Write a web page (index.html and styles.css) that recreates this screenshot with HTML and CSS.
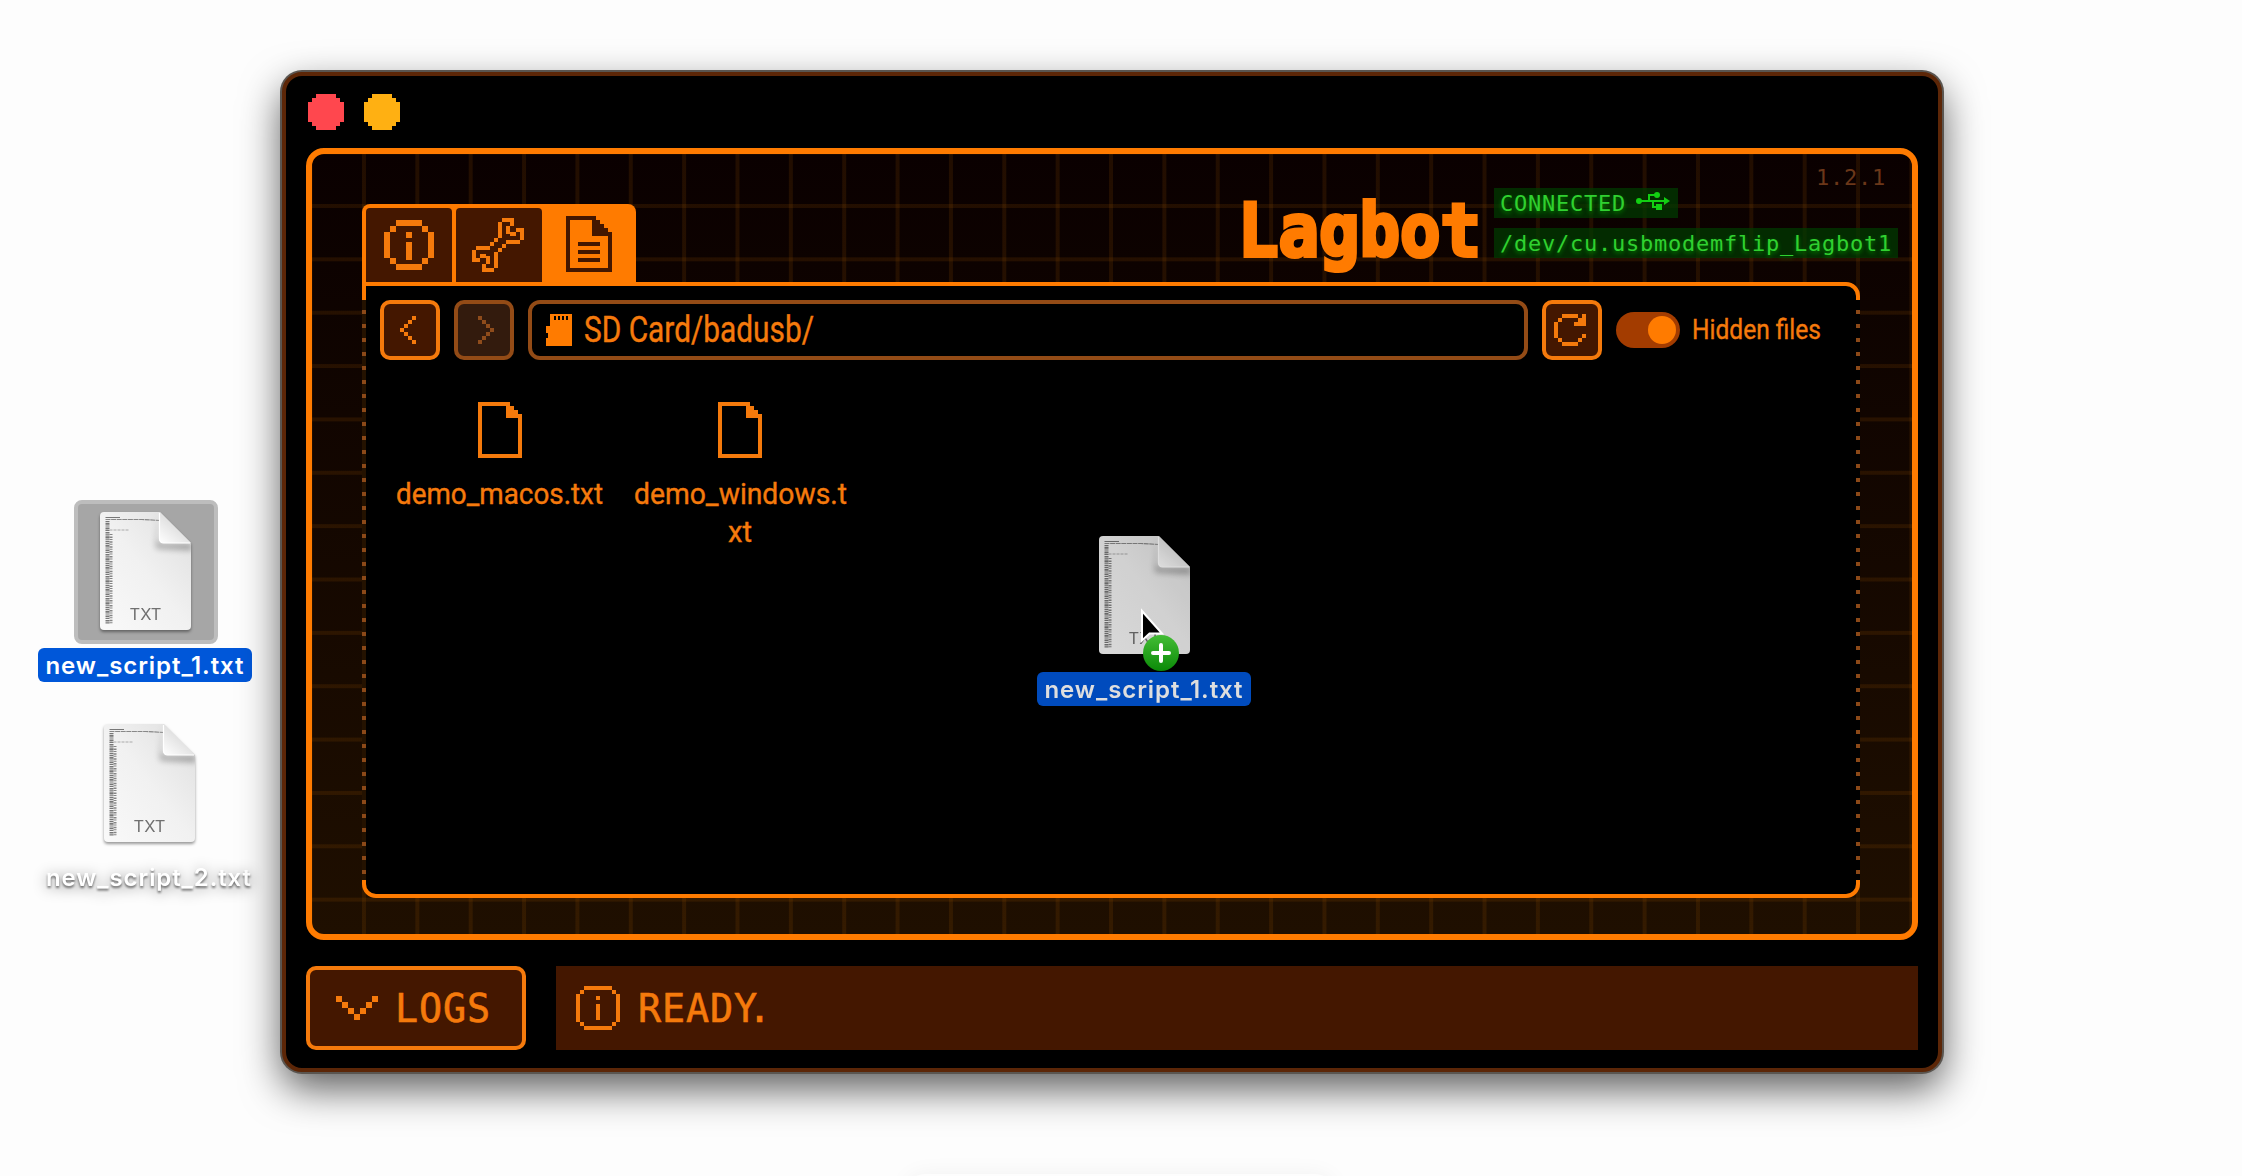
FILE: index.html
```html
<!DOCTYPE html>
<html lang="en">
<head>
<meta charset="utf-8">
<title>Lagbot</title>
<link rel="stylesheet" href="styles.css">
</head>
<body>
<svg class="defs" aria-hidden="true">
  <defs>
    <linearGradient id="paper" x1="0" y1="1" x2="1" y2="0">
      <stop offset="0" stop-color="#f9f9f9"/><stop offset=".5" stop-color="#f1f1f1"/><stop offset="1" stop-color="#dedede"/>
    </linearGradient>
    <linearGradient id="fold" x1="0" y1="1" x2=".6" y2=".3">
      <stop offset="0" stop-color="#ffffff"/><stop offset="1" stop-color="#dadada"/>
    </linearGradient>
    <linearGradient id="plus" x1="0" y1="0" x2="0" y2="1">
      <stop offset="0" stop-color="#43bd35"/><stop offset="1" stop-color="#0b8a08"/>
    </linearGradient>
    <filter id="soft" x="-30%" y="-30%" width="160%" height="160%"><feGaussianBlur stdDeviation="3"/></filter>
    <clipPath id="sheet"><path d="M4 0H60L91 31V114a4 4 0 0 1-4 4H4a4 4 0 0 1-4-4V4a4 4 0 0 1 4-4z"/></clipPath>
    <symbol id="txt-doc" viewBox="0 0 91 118">
      <g clip-path="url(#sheet)">
        <path d="M0 0H91V118H0z" fill="url(#paper)"/>
        <path d="M58 0V28a4 4 0 0 0 4 4H92V38L56 36z" fill="#000" opacity=".35" filter="url(#soft)"/>
        <path d="M5.500 5.500H20" stroke="#777" stroke-width="1"/>
        <path d="M5.500 7.500H42L60 8.500" fill="none" stroke="#888" stroke-width="1.200" stroke-dasharray="5 .6"/>
        <path d="M5.500 18H29" stroke="#aaa" stroke-width="1" stroke-dasharray="3 1"/>
        <path d="M7.500 9V112" stroke="#777" stroke-width="4" stroke-dasharray="1.200 .9 1.600 .7"/>
        <path d="M11 22V112" stroke="#858585" stroke-width="3" stroke-dasharray="1 1.400 1.500 1"/>
      </g>
      <path d="M59.500 0V27a4 4 0 0 0 4 4H91z" fill="url(#fold)"/>
      <path d="M59.500 1V27a4 4 0 0 0 4 4H90" fill="none" stroke="#fff" stroke-width="1.200"/>
    </symbol>
    <symbol id="file" viewBox="0 0 44 56">
      <path fill-rule="evenodd" d="M0 0H32V4H36V8H40V12H44V56H0zM4 4V52H40V16H28V4z"/>
    </symbol>
  </defs>
</svg>

<div class="dock-shadow"></div>

<div class="desk-file desk-file--first">
  <div class="thumb thumb--selected"><div class="doc"><svg width="91" height="118"><use href="#txt-doc"/></svg><span class="doc-type">TXT</span></div></div>
  <div class="name name--selected"><svg width="214" height="34"><text x="7.500" y="26" textLength="198">new_script_1.txt</text></svg></div>
</div>

<div class="desk-file desk-file--second">
  <div class="doc"><svg width="91" height="118"><use href="#txt-doc"/></svg><span class="doc-type">TXT</span></div>
  <div class="name name--plain"><svg width="214" height="40"><text x="4" y="28" textLength="205">new_script_2.txt</text></svg></div>
</div>

<main class="window">
  <div class="titlebar">
    <svg class="px light light--close" width="36" height="36"><path d="M8 0H28V4H32V8H36V28H32V32H28V36H8V32H4V28H0V8H4V4H8z"/></svg>
    <svg class="px light light--min" width="36" height="36"><path d="M8 0H28V4H32V8H36V28H32V32H28V36H8V32H4V28H0V8H4V4H8z"/></svg>
  </div>

  <section class="screen">
    <header class="header">
      <nav class="tabs">
        <a class="tab">
          <svg class="px" width="50" height="50"><path d="M12 0H38V6H12zM6 6H12V12H6zM38 6H44V12H38zM0 12H6V38H0zM44 12H50V38H44zM6 38H12V44H6zM38 38H44V44H38zM12 44H38V50H12zM22 12H28V18H22zM22 22H28V40H22z"/></svg>
        </a>
        <a class="tab tab--tools">
          <svg class="px" width="52" height="54">
            <g id="jaw"><path d="M30 0H42V4H30zM26 4H30V20H26zM38 4H42V8H38zM34 8H38V16H34zM38 14H44V18H38zM44 10H52V14H44zM48 14H52V22H48zM34 22H48V26H34zM30 26H34V30H30zM26 30H30V34H26z"/></g>
            <use href="#jaw" transform="rotate(180 26 27)"/>
          </svg>
        </a>
        <a class="tab tab--active">
          <svg class="px" width="46" height="56"><path fill-rule="evenodd" d="M0 0H30V4H34V8H38V12H42V16H46V56H0zM4 4V52H42V20H26V4z"/><path d="M12 26H34V30H12zM12 34H34V38H12zM12 42H34V46H12z"/></svg>
        </a>
      </nav>
      <svg class="logo" width="238" height="128"><text x="-6" y="102" textLength="243" lengthAdjust="spacingAndGlyphs">Lagbot</text></svg>
      <div class="status">
        <div class="version">1.2.1</div>
        <div class="badge"><span>CONNECTED</span>
          <svg class="usb" width="34" height="18"><circle cx="3" cy="9" r="3"/><path d="M3 8H28V10H3zM28 5L34 9L28 13zM20 12H26V18H20z"/><circle cx="21" cy="3" r="3"/><path d="M10 9L13 9V3H20M17 9V15H21" fill="none" stroke="#12cf12" stroke-width="2"/></svg>
        </div>
        <div class="badge"><span>/dev/cu.usbmodemflip_Lagbot1</span></div>
      </div>
    </header>

    <div class="browser">
      <div class="toolbar">
        <button class="btn btn--back"><svg class="px" width="16" height="28"><path d="M12 0H16V4H12zM8 4H12V8H8zM4 8H8V12H4zM0 12H4V16H0zM4 16H8V20H4zM8 20H12V24H8zM12 24H16V28H12z"/></svg></button>
        <button class="btn btn--off"><svg class="px" width="16" height="28"><path d="M0 0H4V4H0zM4 4H8V8H4zM8 8H12V12H8zM12 12H16V16H12zM8 16H12V20H8zM4 20H8V24H4zM0 24H4V28H0z"/></svg></button>
        <div class="path">
          <svg class="px" width="26" height="32"><path fill-rule="evenodd" d="M4 0H26V32H0V24H2V19H0V12H4zM8 2V6H10V2zM12 2V6H14V2zM16 2V6H18V2zM20 2V6H22V2z"/></svg>
          <svg class="path-text" width="232" height="52"><text x="-1" y="38" textLength="230" lengthAdjust="spacingAndGlyphs">SD Card/badusb/</text></svg>
        </div>
        <button class="btn btn--reload"><svg class="px" width="32" height="32"><path d="M8 0H24V4H8zM28 0H32V12H20V8H24V4H28zM4 4H8V8H4zM0 8H4V24H0zM4 24H8V28H4zM8 28H24V32H8zM24 24H28V28H24zM28 20H32V24H28z"/></svg></button>
        <div class="toggle"><span class="knob"></span></div>
        <svg class="toggle-text" width="130" height="52"><text x="-1" y="35" textLength="129" lengthAdjust="spacingAndGlyphs">Hidden files</text></svg>
      </div>
      <div class="files">
        <div class="file">
          <svg class="px" width="44" height="56"><use href="#file"/></svg>
          <svg class="file-name" width="216" height="86"><text x="4" y="37" textLength="207" lengthAdjust="spacingAndGlyphs">demo_macos.txt</text></svg>
        </div>
        <div class="file">
          <svg class="px" width="44" height="56"><use href="#file"/></svg>
          <svg class="file-name" width="216" height="86"><text x="2" y="37" textLength="213" lengthAdjust="spacingAndGlyphs">demo_windows.t</text><text x="96" y="75" textLength="24" lengthAdjust="spacingAndGlyphs">xt</text></svg>
        </div>
      </div>
    </div>
  </section>

  <footer class="footer">
    <button class="logs">
      <svg class="px" width="42" height="24"><path d="M0 0H6V6H0zM6 6H12V12H6zM12 12H18V18H12zM18 18H24V24H18zM24 12H30V18H24zM30 6H36V12H30zM36 0H42V6H36z"/></svg>
      <span>LOGS</span>
    </button>
    <div class="message">
      <svg class="px" width="44" height="44"><path d="M8 0H36V4H8zM4 4H8V8H4zM36 4H40V8H36zM0 8H4V36H0zM40 8H44V36H40zM4 36H8V40H4zM36 36H40V40H36zM8 40H36V44H8zM20 10H24V14H20zM20 18H24V34H20z"/></svg>
      <span>READ<span class="tight">Y</span>.</span>
    </div>
  </footer>
</main>

<div class="drag">
  <div class="drag-ghost">
    <div class="doc"><svg width="91" height="118"><use href="#txt-doc"/></svg><span class="doc-type">TXT</span></div>
    <div class="name name--selected"><svg width="214" height="34"><text x="7.500" y="26" textLength="198">new_script_1.txt</text></svg></div>
  </div>
  <svg class="cursor" width="60" height="70">
    <path d="M5 4V33.500L12.500 26.500H25z" fill="#000" stroke="#fff" stroke-width="2" stroke-linejoin="miter"/>
    <circle cx="24" cy="47" r="18" fill="url(#plus)"/>
    <path d="M24 39V55M16 47H32" stroke="#fff" stroke-width="4" stroke-linecap="round"/>
  </svg>
</div>
</body>
</html>
```
FILE: styles.css
```css
* { box-sizing: border-box; }

body {
  margin: 0;
  width: 2242px;
  height: 1176px;
  position: relative;
  overflow: hidden;
  background: #fdfdfd;
  font-family: Inter, sans-serif;
}

svg { display: block; flex: none; fill: currentColor; overflow: visible; }
.px { shape-rendering: crispEdges; }
.defs { position: absolute; width: 0; height: 0; }

.dock-shadow {
  position: absolute;
  left: 905px;
  top: 1174px;
  width: 430px;
  height: 40px;
  border-radius: 20px;
  box-shadow: 0 0 22px rgba(0, 0, 0, .05);
}

/* Desktop files */
.desk-file { position: absolute; display: flex; flex-direction: column; align-items: center; width: 214px; }
.desk-file--first { left: 38px; top: 500px; gap: 4px; }
.desk-file--second { left: 42px; top: 724px; gap: 16px; }
.thumb { width: 144px; height: 144px; padding: 8px 0 0 22px; border-radius: 8px; align-self: flex-start; margin-left: 36px; }
.thumb--selected { background: #a6a6a6; border: 4px solid #bdbdbd; }
.doc { position: relative; width: 91px; height: 118px; filter: drop-shadow(0 2px 1.500px rgba(0, 0, 0, .4)); }
.doc-type {
  position: absolute;
  left: 0;
  right: 0;
  bottom: 6px;
  text-align: center;
  font-size: 16.500px;
  line-height: 20px;
  color: #707070;
}
.desk-file--second .doc { align-self: flex-start; margin-left: 62px; }
.name { font-size: 24px; font-weight: 600; color: #fff; border-radius: 6px; }
.name--selected { background: #0057d9; }
.name--plain svg { filter: drop-shadow(0 2px 1px rgba(0, 0, 0, .5)) drop-shadow(0 2px 7px rgba(0, 0, 0, .4)); }

/* App window */
.window {
  position: absolute;
  left: 282px;
  top: 72px;
  width: 1660px;
  height: 1000px;
  padding: 0 20px 18px;
  display: flex;
  flex-direction: column;
  background: #000;
  border: 4px solid #5c2607;
  border-radius: 20px;
  color: #f57a0c;
  box-shadow: 0 0 0 2px #5a5550, 0 16px 40px rgba(0, 0, 0, .66);
}
.titlebar { display: flex; gap: 20px; height: 72px; padding: 18px 2px; }
.light--close { color: #ff474e; }
.light--min { color: #ffb012; }

.screen {
  height: 792px;
  display: flex;
  flex-direction: column;
  border: 6px solid #ff7b00;
  border-radius: 18px;
  background:
    linear-gradient(rgba(160, 85, 0, .16) 4px, transparent 4px) 0 50px / 100% 53.370px,
    linear-gradient(90deg, rgba(160, 85, 0, .16) 4px, transparent 4px) 50px 0 / 53.360px 100%,
    linear-gradient(#0a0000, #1f0f00);
}

.header { display: flex; height: 128px; padding: 0 14px 0 50px; }
.tabs {
  display: flex;
  align-self: flex-end;
  width: 274px;
  height: 78px;
  padding: 4px 0 0 4px;
  gap: 4px;
  background: #ff7b00;
  border-radius: 8px 8px 0 0;
}
.tab { width: 86px; height: 74px; display: flex; align-items: center; justify-content: center; background: #441700; border-radius: 4px 4px 0 0; }
.tab--tools { padding-right: 2px; }
.tab--active { background: none; color: #441700; padding-bottom: 2px; }

.logo {
  margin-left: auto;
  margin-right: 12px;
  color: #ff7b00;
  font: bold 73px "DejaVu Sans Mono", monospace;
  stroke: #ff7b00;
  stroke-width: 4px;
  stroke-linejoin: miter;
}

.status {
  width: 404px;
  display: flex;
  flex-direction: column;
  align-items: flex-start;
  font: 22px/30px "DejaVu Sans Mono", monospace;
  letter-spacing: .756px;
  color: #30d030;
}
.version { align-self: flex-end; height: 26px; margin: 8px 12px 0 0; padding-top: 1px; color: #6b3719; }
.badge {
  display: flex;
  align-items: center;
  height: 30px;
  padding: 0 6px;
  margin-bottom: 10px;
  background: rgba(0, 60, 0, .72);
  text-shadow: 0 2px 4px rgba(0, 255, 0, .4);
  white-space: nowrap;
}
.badge span { padding-top: 2px; }
.badge:last-child { width: 404px; }
.usb { margin: -4px 2px 0 10px; color: #12cf12; }

.browser {
  position: relative;
  height: 616px;
  margin: 0 52px 0 50px;
  background: #000;
  border: 4px solid #ff7b00;
  border-radius: 0 14px 14px 14px;
}
.browser::before, .browser::after {
  content: "";
  position: absolute;
  top: 14px;
  bottom: 14px;
  width: 4px;
}
.browser::before { left: -4px; background: repeating-linear-gradient(#241200 0 10px, #8c4918 10px 14px); }
.browser::after { right: -4px; background: repeating-linear-gradient(#000 0 10px, #8c4918 10px 14px); }

.toolbar { display: flex; align-items: center; padding: 14px 0 0 14px; }
.btn {
  display: flex;
  align-items: center;
  justify-content: center;
  width: 60px;
  height: 60px;
  padding: 0;
  margin-right: 14px;
  color: inherit;
  background: #441700;
  border: 4px solid #f57a0c;
  border-radius: 10px;
}
.btn--back, .btn--reload { padding-right: 4px; }
.btn--off { padding-left: 4px; color: #8f4c1b; background: #331b0d; border-color: #934b16; }
.path {
  display: flex;
  align-items: center;
  gap: 13px;
  width: 1000px;
  height: 60px;
  padding-left: 14px;
  margin-right: 14px;
  border: 4px solid #934b16;
  border-radius: 12px;
}
.path .px { color: #ff7b00; }
.path-text { font: 36px Roboto, sans-serif; }
.toggle { display: flex; justify-content: flex-end; width: 64px; height: 36px; padding: 4px; border-radius: 18px; background: #a33c00; }
.knob { width: 28px; height: 28px; border-radius: 50%; background: #ff7b00; }
.toggle-text { margin-left: 13px; font: 28px Roboto, sans-serif; }
.path-text, .toggle-text, .file-name { stroke: currentColor; stroke-width: .4px; }

.files { display: flex; padding: 42px 0 0 14px; }
.file { display: flex; flex-direction: column; align-items: center; width: 240px; gap: 9px; }
.file-name { font: 30px Roboto, sans-serif; }

.footer {
  display: flex;
  gap: 30px;
  margin-top: 26px;
  font: 38.400px "DejaVu Sans Mono", monospace;
  letter-spacing: .880px;
  -webkit-text-stroke: .6px currentColor;
}
.logs {
  display: flex;
  align-items: center;
  gap: 17px;
  width: 220px;
  height: 84px;
  padding: 0 0 0 26px;
  font: inherit;
  letter-spacing: inherit;
  color: inherit;
  background: #441700;
  border: 4px solid #f57a0c;
  border-radius: 10px;
}
.message { display: flex; align-items: center; gap: 18px; flex: 1; height: 84px; padding-left: 20px; background: #441700; }
.tight { letter-spacing: -9px; }

/* File being dragged */
.drag { position: absolute; left: 1037px; top: 536px; width: 214px; }
.drag-ghost { display: flex; flex-direction: column; gap: 18px; opacity: .87; }
.drag-ghost .doc { margin-left: 62px; filter: none; }
.cursor { position: absolute; left: 100px; top: 71px; }
.cursor circle, .cursor path + circle + path { transform: translateY(-1px); }
```
